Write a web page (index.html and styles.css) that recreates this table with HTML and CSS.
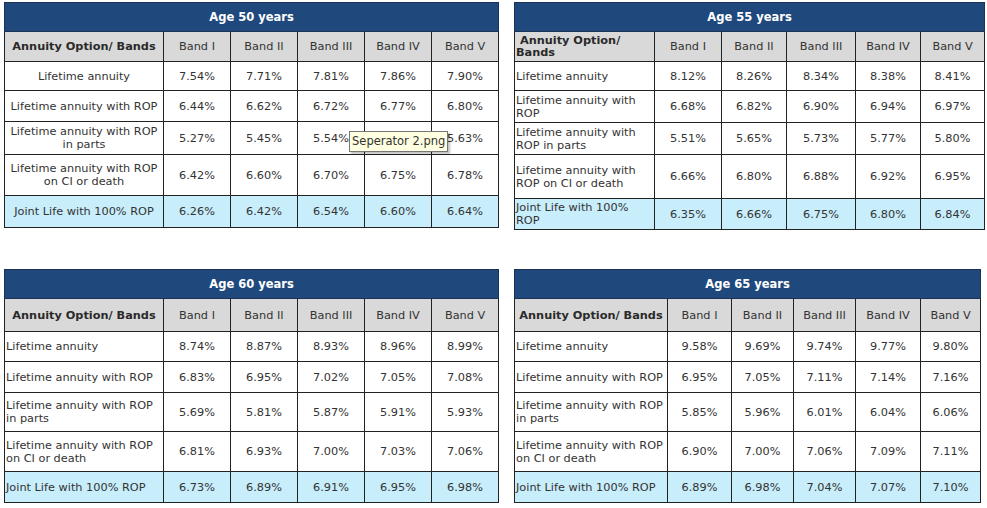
FILE: index.html
```html
<!DOCTYPE html>
<html>
<head>
<meta charset="utf-8">
<link rel="stylesheet" href="styles.css">
</head>
<body>
<div class="grid">
  <table class="rates t50">
    <colgroup><col class="c0"><col class="cb"><col class="cb"><col class="cb"><col class="cb"><col class="cb"></colgroup>
    <tr class="title"><th colspan="6">Age 50 years</th></tr>
    <tr class="head"><th class="opt">Annuity Option/ Bands</th><th>Band I</th><th>Band II</th><th>Band III</th><th>Band IV</th><th>Band V</th></tr>
    <tr class="r1"><td class="name">Lifetime annuity</td><td>7.54%</td><td>7.71%</td><td>7.81%</td><td>7.86%</td><td>7.90%</td></tr>
    <tr class="r2"><td class="name">Lifetime annuity with ROP</td><td>6.44%</td><td>6.62%</td><td>6.72%</td><td>6.77%</td><td>6.80%</td></tr>
    <tr class="r3"><td class="name">Lifetime annuity with ROP<br>in parts</td><td>5.27%</td><td>5.45%</td><td>5.54%</td><td>5.60%</td><td>5.63%</td></tr>
    <tr class="r4"><td class="name">Lifetime annuity with ROP<br>on CI or death</td><td>6.42%</td><td>6.60%</td><td>6.70%</td><td>6.75%</td><td>6.78%</td></tr>
    <tr class="r5 joint"><td class="name">Joint Life with 100% ROP</td><td>6.26%</td><td>6.42%</td><td>6.54%</td><td>6.60%</td><td>6.64%</td></tr>
  </table>

  <table class="rates t55">
    <colgroup><col class="c0"><col class="b1"><col class="b2"><col class="b3"><col class="b4"><col class="b5"></colgroup>
    <tr class="title"><th colspan="6">Age 55 years</th></tr>
    <tr class="head"><th class="opt">&nbsp;Annuity Option/<br>Bands</th><th>Band I</th><th>Band II</th><th>Band III</th><th>Band IV</th><th>Band V</th></tr>
    <tr class="r1"><td class="name">Lifetime annuity</td><td>8.12%</td><td>8.26%</td><td>8.34%</td><td>8.38%</td><td>8.41%</td></tr>
    <tr class="r2"><td class="name">Lifetime annuity with<br>ROP</td><td>6.68%</td><td>6.82%</td><td>6.90%</td><td>6.94%</td><td>6.97%</td></tr>
    <tr class="r3"><td class="name">Lifetime annuity with<br>ROP in parts</td><td>5.51%</td><td>5.65%</td><td>5.73%</td><td>5.77%</td><td>5.80%</td></tr>
    <tr class="r4"><td class="name">Lifetime annuity with<br>ROP on CI or death</td><td>6.66%</td><td>6.80%</td><td>6.88%</td><td>6.92%</td><td>6.95%</td></tr>
    <tr class="r5 joint"><td class="name">Joint Life with 100%<br>ROP</td><td>6.35%</td><td>6.66%</td><td>6.75%</td><td>6.80%</td><td>6.84%</td></tr>
  </table>

  <table class="rates t60">
    <colgroup><col class="c0"><col class="cb"><col class="cb"><col class="cb"><col class="cb"><col class="cb"></colgroup>
    <tr class="title"><th colspan="6">Age 60 years</th></tr>
    <tr class="head"><th class="opt">Annuity Option/ Bands</th><th>Band I</th><th>Band II</th><th>Band III</th><th>Band IV</th><th>Band V</th></tr>
    <tr class="r1"><td class="name">Lifetime annuity</td><td>8.74%</td><td>8.87%</td><td>8.93%</td><td>8.96%</td><td>8.99%</td></tr>
    <tr class="r2"><td class="name">Lifetime annuity with ROP</td><td>6.83%</td><td>6.95%</td><td>7.02%</td><td>7.05%</td><td>7.08%</td></tr>
    <tr class="r3"><td class="name">Lifetime annuity with ROP<br>in parts</td><td>5.69%</td><td>5.81%</td><td>5.87%</td><td>5.91%</td><td>5.93%</td></tr>
    <tr class="r4"><td class="name">Lifetime annuity with ROP<br>on CI or death</td><td>6.81%</td><td>6.93%</td><td>7.00%</td><td>7.03%</td><td>7.06%</td></tr>
    <tr class="r5 joint"><td class="name">Joint Life with 100% ROP</td><td>6.73%</td><td>6.89%</td><td>6.91%</td><td>6.95%</td><td>6.98%</td></tr>
  </table>

  <table class="rates t65">
    <colgroup><col class="c0"><col class="b1"><col class="b2"><col class="b3"><col class="b4"><col class="b5"></colgroup>
    <tr class="title"><th colspan="6">Age 65 years</th></tr>
    <tr class="head"><th class="opt">Annuity Option/ Bands</th><th>Band I</th><th>Band II</th><th>Band III</th><th>Band IV</th><th>Band V</th></tr>
    <tr class="r1"><td class="name">Lifetime annuity</td><td>9.58%</td><td>9.69%</td><td>9.74%</td><td>9.77%</td><td>9.80%</td></tr>
    <tr class="r2"><td class="name">Lifetime annuity with ROP</td><td>6.95%</td><td>7.05%</td><td>7.11%</td><td>7.14%</td><td>7.16%</td></tr>
    <tr class="r3"><td class="name">Lifetime annuity with ROP<br>in parts</td><td>5.85%</td><td>5.96%</td><td>6.01%</td><td>6.04%</td><td>6.06%</td></tr>
    <tr class="r4"><td class="name">Lifetime annuity with ROP<br>on CI or death</td><td>6.90%</td><td>7.00%</td><td>7.06%</td><td>7.09%</td><td>7.11%</td></tr>
    <tr class="r5 joint"><td class="name">Joint Life with 100% ROP</td><td>6.89%</td><td>6.98%</td><td>7.04%</td><td>7.07%</td><td>7.10%</td></tr>
  </table>
</div>
<div class="tooltip">Seperator 2.png</div>
</body>
</html>
```

FILE: styles.css
```css
html, body {
  margin: 0;
  background: #ffffff;
}
body {
  padding: 2px 0 0 4px;
  font-family: "DejaVu Sans", Verdana, sans-serif;
  font-size: 11.3px;
  color: #333333;
}
.grid {
  display: grid;
  grid-template-columns: 495px 470px;
  column-gap: 15px;
  row-gap: 39px;
  align-items: start;
  justify-items: start;
}
.rates {
  border-collapse: collapse;
  table-layout: fixed;
  width: 100%;
}
.rates.t65 {
  width: 466px;
}
.rates th, .rates td {
  border: 1px solid #222222;
  padding: 0 2px;
  text-align: center;
  white-space: nowrap;
  line-height: 13px;
}
.t50 .c0, .t60 .c0 { width: 159px; }
.t50 .cb, .t60 .cb { width: 67px; }
.t55 .c0 { width: 140px; }
.t55 .b1 { width: 67px; }
.t55 .b2 { width: 65px; }
.t55 .b3 { width: 69px; }
.t55 .b4 { width: 65px; }
.t55 .b5 { width: 64px; }
.t65 .c0 { width: 153px; }
.t65 .b1 { width: 64px; }
.t65 .b2 { width: 62px; }
.t65 .b3 { width: 62px; }
.t65 .b4 { width: 65px; }
.t65 .b5 { width: 60px; }

.title th {
  background: #1f497d;
  color: #ffffff;
  font-weight: bold;
  font-size: 11.5px;
  height: 28px;
  border-color: #1a3355;
}
.head th {
  background: #d9d9d9;
  font-weight: normal;
  color: #333333;
  height: 29px;
}
.head th.opt {
  font-weight: bold;
  color: #2a2a2a;
}
.t55 .head th.opt {
  text-align: left;
  padding-left: 1px;
  line-height: 12px;
}
.t50 .r1 td { height: 28px; }
.t50 .r2 td { height: 30px; }
.t50 .r3 td { height: 32px; }
.t50 .r4 td { height: 40px; }
.t50 .r5 td { height: 31px; }

.t55 .r1 td { height: 28px; }
.t55 .r2 td { height: 31px; }
.t55 .r3 td { height: 31px; }
.t55 .r4 td { height: 43px; }
.t55 .r5 td { height: 30px; }

.t60 .head th, .t65 .head th { height: 32px; }
.t60 .r1 td, .t65 .r1 td { height: 29px; }
.t60 .r2 td, .t65 .r2 td { height: 30px; }
.t60 .r3 td, .t65 .r3 td { height: 38px; }
.t60 .r4 td, .t65 .r4 td { height: 39px; }
.t60 .r5 td, .t65 .r5 td { height: 30px; }

.t55 td.name, .t60 td.name, .t65 td.name {
  text-align: left;
  padding-left: 1px;
}
.joint td {
  background: #c8edfb;
}
.tooltip {
  position: absolute;
  left: 349px;
  top: 131px;
  padding: 2px 2px 3px 2px;
  background: #ffffe1;
  border: 1px solid #767676;
  box-shadow: 2px 2px 2px rgba(0, 0, 0, 0.25);
  font-family: "DejaVu Sans", Verdana, sans-serif;
  font-size: 11.5px;
  color: #333333;
  line-height: 14px;
}
```
